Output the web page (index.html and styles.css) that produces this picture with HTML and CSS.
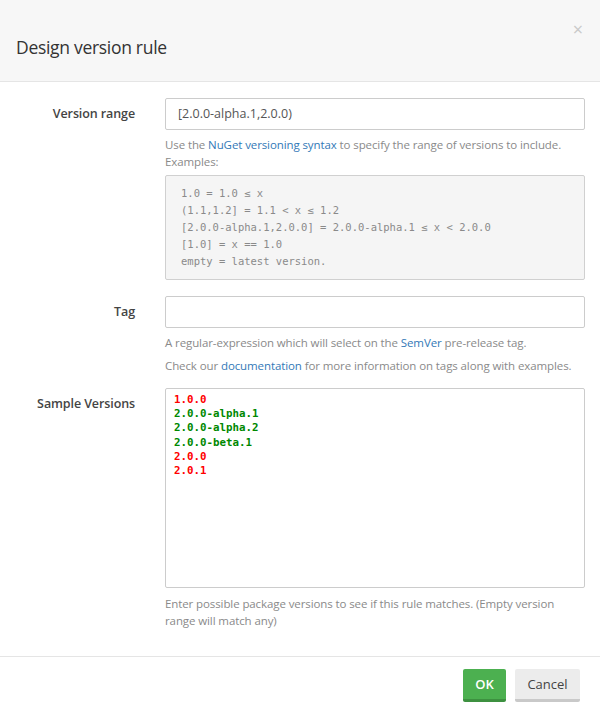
FILE: index.html
```html
<!DOCTYPE html>
<html>
<head>
<meta charset="utf-8">
<link rel="stylesheet" href="styles.css">
</head>
<body>
<div class="modal">
  <div class="modal-header">
    <h4 class="modal-title">Design version rule</h4>
    <span class="close">&times;</span>
  </div>
  <div class="modal-body">
    <div class="form-row">
      <label class="form-label">Version range</label>
      <div class="field">
        <div class="input">[2.0.0-alpha.1,2.0.0)</div>
        <p class="help">Use the <a>NuGet versioning syntax</a> to specify the range of versions to include. Examples:</p>
        <pre class="examples">1.0 = 1.0 ≤ x
(1.1,1.2] = 1.1 &lt; x ≤ 1.2
[2.0.0-alpha.1,2.0.0] = 2.0.0-alpha.1 ≤ x &lt; 2.0.0
[1.0] = x == 1.0
empty = latest version.</pre>
      </div>
    </div>
    <div class="form-row form-row-tight">
      <label class="form-label">Tag</label>
      <div class="field">
        <div class="input"></div>
        <p class="help">A regular-expression which will select on the <a>SemVer</a> pre-release tag.</p>
        <p class="help">Check our <a>documentation</a> for more information on tags along with examples.</p>
      </div>
    </div>
    <div class="form-row">
      <label class="form-label">Sample Versions</label>
      <div class="field">
        <div class="textarea"><span class="no">1.0.0</span>
<span class="yes">2.0.0-alpha.1</span>
<span class="yes">2.0.0-alpha.2</span>
<span class="yes">2.0.0-beta.1</span>
<span class="no">2.0.0</span>
<span class="no">2.0.1</span></div>
        <p class="help help-after">Enter possible package versions to see if this rule matches. (Empty version range will match any)</p>
      </div>
    </div>
  </div>
  <div class="modal-footer">
    <button class="btn btn-ok">OK</button>
    <button class="btn btn-cancel">Cancel</button>
  </div>
</div>
</body>
</html>
```

FILE: styles.css
```css
html, body {
  margin: 0;
  padding: 0;
  background: #fff;
}
body {
  font-family: "Open Sans", "Noto Sans", sans-serif;
  font-size: 11.5px;
  letter-spacing: -0.1px;
  color: #333;
  width: 600px;
  height: 714px;
  overflow: hidden;
}
.modal {
  display: flex;
  flex-direction: column;
  height: 714px;
}
.modal-header {
  flex-shrink: 0;
  box-sizing: border-box;
  background: #f7f7f7;
  border-bottom: 1px solid #e5e5e5;
  height: 82px;
  display: flex;
  align-items: flex-start;
  justify-content: space-between;
  padding: 0 16px;
}
.modal-title {
  margin: 34px 0 0 0;
  font-size: 17.5px;
  font-weight: 400;
  letter-spacing: -0.3px;
  line-height: 26px;
  color: #333;
}
.close {
  margin-top: 19px;
  margin-right: 1px;
  font-size: 18px;
  line-height: 20px;
  color: #c9c9c9;
}
.modal-body {
  padding: 16px 15px 0 0;
  flex: 1;
}
.form-row {
  display: grid;
  grid-template-columns: 135px 420px;
  column-gap: 30px;
  margin-bottom: 16px;
}
.form-row-tight {
  margin-bottom: 14px;
}
.form-label {
  text-align: right;
  font-weight: 600;
  font-size: 12.5px;
  letter-spacing: -0.1px;
  line-height: 32px;
  color: #444;
}
.input {
  height: 32px;
  box-sizing: border-box;
  border: 1px solid #ccc;
  border-radius: 2px;
  padding: 0 12px;
  line-height: 30px;
  font-size: 12.5px;
  letter-spacing: 0;
  color: #555;
}
.help {
  margin: 6px 0 0;
  line-height: 17px;
  color: #8a8a8a;
}
.help-after {
  margin-top: 7px;
}
.help a {
  color: #3379b7;
}
.examples {
  margin: 5px 0 0;
  padding: 9px 15px;
  background: #f5f5f5;
  border: 1px solid #d0d0d0;
  border-radius: 2px;
  font-family: "DejaVu Sans Mono", monospace;
  font-size: 10.5px;
  letter-spacing: 0;
  line-height: 17px;
  color: #8a8a8a;
}
.textarea {
  height: 200px;
  box-sizing: border-box;
  border: 1px solid #ccc;
  border-radius: 2px;
  padding: 4px 8px;
  font-family: "DejaVu Sans Mono", monospace;
  font-size: 10.8px;
  letter-spacing: 0;
  font-weight: bold;
  line-height: 14.2px;
  white-space: pre;
}
.no { color: #f00; }
.yes { color: #080; }
.modal-footer {
  flex-shrink: 0;
  box-sizing: border-box;
  border-top: 1px solid #e5e5e5;
  height: 58px;
  display: flex;
  justify-content: flex-end;
  align-items: flex-start;
  gap: 9px;
  padding: 12px 20px 0 0;
}
.btn {
  font-family: "Open Sans", "Noto Sans", sans-serif;
  font-size: 13px;
  height: 33px;
  border: none;
  border-radius: 2px;
  padding: 0;
  cursor: pointer;
}
.btn-ok {
  background: #4cb050;
  border-bottom: 3px solid #3d9140;
  color: #fff;
  font-weight: 600;
  width: 43px;
}
.btn-cancel {
  background: #ececec;
  border-bottom: 3px solid #c9c9c9;
  color: #444;
  width: 65px;
}
```
